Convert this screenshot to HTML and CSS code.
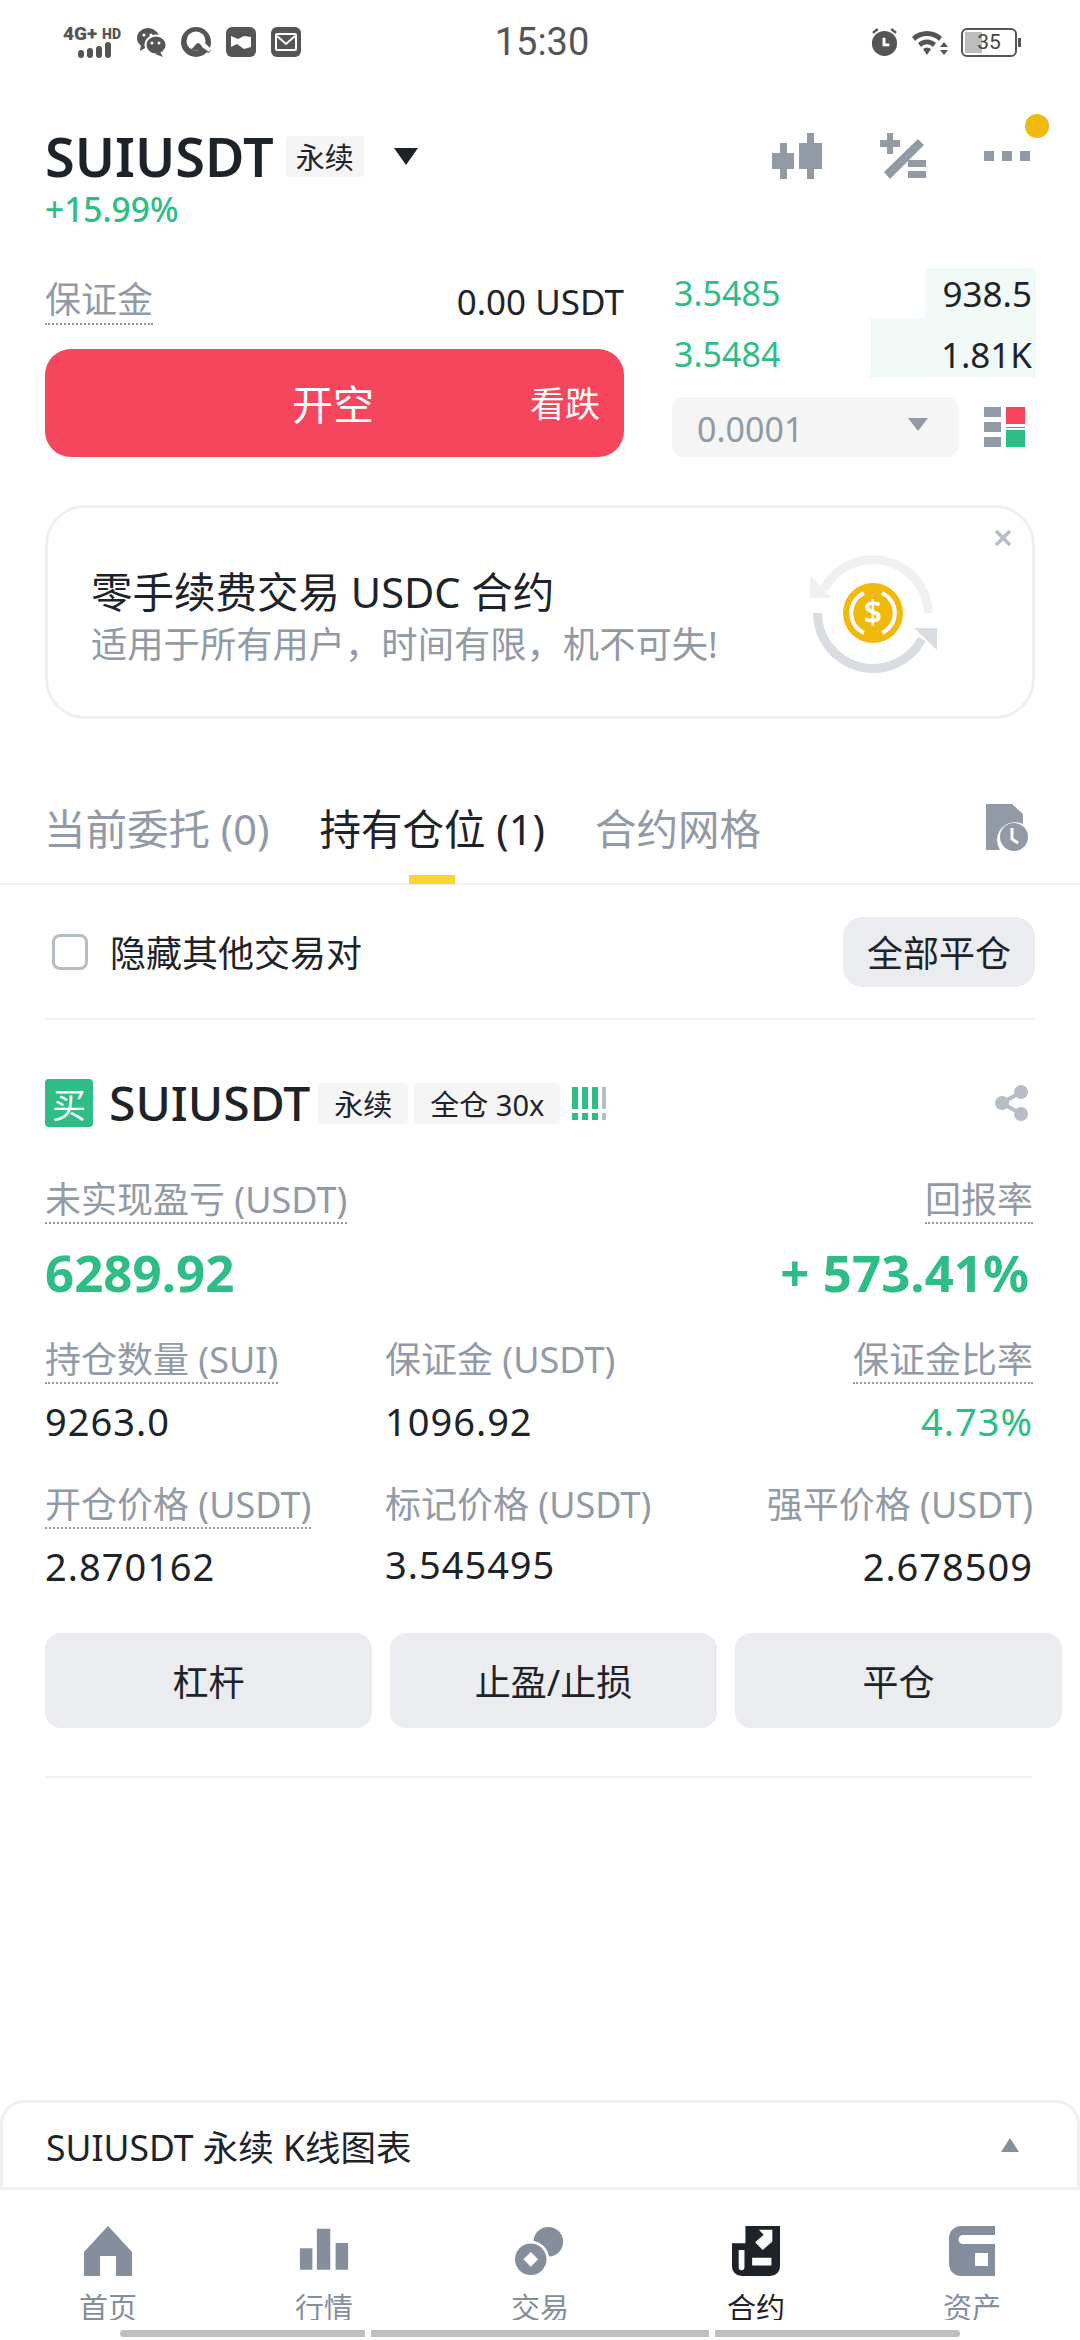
FILE: index.html
```html
<!DOCTYPE html>
<html lang="zh-CN">
<head>
    <meta charset="UTF-8">
    <meta name="viewport" content="width=device-width, initial-scale=1.0">
    <title>SUIUSDT 永续</title>
    <link rel="stylesheet" href="styles.css">
</head>
<body>
    <div class="status-bar">
        <div class="status-left">
            <div class="net">
                <div class="net-text"><span>4G+</span><span class="net-hd">HD</span></div>
                <div class="signal"><i class="s1"></i><i class="s2"></i><i class="s3"></i><i class="s4"></i></div>
            </div>
            <svg class="st-icon" viewBox="0 0 30 30"><ellipse cx="12" cy="11" rx="11" ry="10" fill="#555"/><path d="M5 18l-1 6 7-4z" fill="#555"/><circle cx="8" cy="8" r="1.6" fill="#fff"/><circle cx="15" cy="8" r="1.6" fill="#fff"/><ellipse cx="20" cy="18" rx="10.5" ry="9.5" fill="#555" stroke="#fff" stroke-width="2"/><path d="M24 25l3 5-8-3z" fill="#555"/><circle cx="16" cy="16" r="1.5" fill="#fff"/><circle cx="23" cy="16" r="1.5" fill="#fff"/></svg>
            <svg class="st-icon" viewBox="0 0 30 30"><circle cx="15" cy="15" r="15" fill="#555"/><circle cx="15" cy="14" r="9.500" fill="#fff"/><path d="M10 22c3-1 4-5 7-6 2 0 3 3 5 4l8 3-2 3-8-3c-2 0-8 1-10-1z" fill="#555"/><path d="M21 13l9 9-2 3-7-5z" fill="#fff"/></svg>
            <svg class="st-icon" viewBox="0 0 30 30"><rect width="30" height="30" rx="6" fill="#555"/><path d="M5 9l7 3 6-3 7 1v10l-7 2-7-5-6 3z" fill="#fff"/></svg>
            <svg class="st-icon" viewBox="0 0 30 30"><rect width="30" height="30" rx="6" fill="#555"/><rect x="5" y="7" width="20" height="16" rx="1" fill="none" stroke="#fff" stroke-width="2"/><path d="M6 9l9 8 9-8" fill="none" stroke="#fff" stroke-width="2"/></svg>
        </div>
        <div class="status-time">15:30</div>
        <div class="status-right">
            <svg class="st-alarm" viewBox="0 0 30 30"><circle cx="15" cy="16" r="13" fill="#555"/><path d="M3 5l5-4M27 5l-5-4" stroke="#555" stroke-width="2.5"/><path d="M13 10v9h7v-3h-4v-6z" fill="#fff"/></svg>
            <svg class="st-wifi" viewBox="0 0 38 28"><path d="M1 9a22 22 0 0 1 30 0l-3 4a17 17 0 0 0-24 0zM7 15a13 13 0 0 1 18 0l-3 4a8 8 0 0 0-12 0zM12 21a6 6 0 0 1 8 0l-4 6z" fill="#555"/><path d="M33 14l4 5h-8zM33 27l4-5h-8z" fill="#555"/></svg>
            <div class="battery"><div class="battery-fill"></div><span class="battery-num">35</span></div>
            <div class="battery-tip"></div>
        </div>
    </div>

    <div class="header">
        <div class="title-row">
            <div class="symbol">SUIUSDT</div>
            <div class="tag tag-top">永续</div>
            <div class="title-caret"></div>
            <div class="title-tools">
                <svg class="tool" viewBox="0 0 50 46"><path d="M8 10h7v10h7v16h-7v10H8V36H0V20h8zM35 0h7v10h8v26h-8v10h-7V36h-8V10h8z" fill="#929AA5"/></svg>
                <svg class="tool tool-calc" viewBox="0 0 46 46"><path d="M7 0h6v7h7v7h-7v7H7v-7H0V7h7zM38 6l6 6-34 34-6-7zM28 27h18v7H28zM28 38h18v7H28z" fill="#929AA5"/></svg>
                <div class="tool-more"><i></i><i></i><i></i><span class="more-dot"></span></div>
            </div>
        </div>
        <div class="change">+15.99%</div>
    </div>

    <div class="trade">
        <div class="trade-left">
            <div class="margin-row">
                <span class="dotted margin-label">保证金</span>
                <span class="margin-value">0.00 USDT</span>
            </div>
            <div class="short-btn"><span class="short-main">开空</span><span class="short-side">看跌</span></div>
        </div>
        <div class="book">
            <div class="book-row row-a"><span class="price">3.5485</span><span class="qty" style="width:111px">938.5</span></div>
            <div class="book-row row-b"><span class="price">3.5484</span><span class="qty" style="width:166px">1.81K</span></div>
            <div class="book-tools">
                <div class="tick"><span>0.0001</span><i class="tick-caret"></i></div>
                <svg class="depth" viewBox="0 0 41 40"><path d="M0 0h17v10H0zM0 15h17v10H0zM0 30h17v10H0z" fill="#929AA5"/><path d="M22 0h19v17H22z" fill="#F6465D"/><path d="M22 20h19v1H22z" fill="#2EBD85"/><path d="M22 23h19v17H22z" fill="#2EBD85"/></svg>
            </div>
        </div>
    </div>

    <div class="promo">
        <div class="promo-text">
            <div class="promo-title">零手续费交易 USDC 合约</div>
            <div class="promo-sub">适用于所有用户，时间有限，机不可失!</div>
        </div>
        <svg class="promo-icon" viewBox="0 0 127 122">
            <path d="M118.500 60A55.500 55.500 0 0 0 14 36" fill="none" stroke="#EEF0F2" stroke-width="9"/>
            <path d="M0 22V45H22z" fill="#EEF0F2"/>
            <path d="M7.500 60A55.500 55.500 0 0 0 112 86" fill="none" stroke="#D9DCE1" stroke-width="9"/>
            <path d="M127 75V97L104 75z" fill="#D9DCE1"/>
            <circle cx="63" cy="60" r="30" fill="#F0B90B"/>
            <path d="M54 40a22 22 0 0 0 0 40M72 40a22 22 0 0 1 0 40" fill="none" stroke="#fff" stroke-width="4"/>
            <text class="coin-sign" x="63" y="71">$</text>
        </svg>
        <svg class="promo-close" viewBox="0 0 18 18"><path d="M2 2l14 14M16 2L2 16" stroke="#B7BDC6" stroke-width="3.5"/></svg>
    </div>

    <div class="tabs">
        <div class="tab">当前委托 (0)</div>
        <div class="tab tab-on">持有仓位 (1)</div>
        <div class="tab">合约网格</div>
        <svg class="tab-history" viewBox="0 0 44 48"><path d="M0 0h26l11 10v10a18 18 0 0 0-23 26H0z" fill="#929AA5"/><circle cx="28" cy="33" r="14" fill="#929AA5"/><path d="M26 24v11l6 4" fill="none" stroke="#fff" stroke-width="3"/></svg>
    </div>

    <div class="filter">
        <label class="hide-other"><span class="checkbox"></span>隐藏其他交易对</label>
        <div class="close-all">全部平仓</div>
    </div>

    <div class="position">
        <div class="pos-head">
            <div class="buy">买</div>
            <div class="pos-symbol">SUIUSDT</div>
            <div class="tag">永续</div>
            <div class="tag">全仓 30x</div>
            <div class="risk"><i></i><i></i><i></i><i class="risk-off"></i></div>
            <svg class="share" viewBox="0 0 34 36"><circle cx="26" cy="7" r="7" fill="#B7BDC6"/><circle cx="7" cy="18" r="7" fill="#B7BDC6"/><circle cx="26" cy="29" r="7" fill="#B7BDC6"/><path d="M26 7L7 18l19 11" fill="none" stroke="#B7BDC6" stroke-width="4"/></svg>
        </div>

        <div class="pnl">
            <div class="cell">
                <span class="dotted label">未实现盈亏 (USDT)</span>
                <div class="pnl-value">6289.92</div>
            </div>
            <div class="cell cell-right">
                <span class="dotted label">回报率</span>
                <div class="pnl-value">+ 573.41%</div>
            </div>
        </div>

        <div class="stats">
            <div class="cell">
                <span class="dotted label">持仓数量 (SUI)</span>
                <div class="value">9263.0</div>
            </div>
            <div class="cell">
                <span class="label">保证金 (USDT)</span>
                <div class="value">1096.92</div>
            </div>
            <div class="cell cell-right">
                <span class="dotted label">保证金比率</span>
                <div class="value value-green">4.73%</div>
            </div>
            <div class="cell">
                <span class="dotted label">开仓价格 (USDT)</span>
                <div class="value">2.870162</div>
            </div>
            <div class="cell">
                <span class="label">标记价格 (USDT)</span>
                <div class="value value-mark">3.545495</div>
            </div>
            <div class="cell cell-right">
                <span class="label">强平价格 (USDT)</span>
                <div class="value">2.678509</div>
            </div>
        </div>

        <div class="actions">
            <div class="action">杠杆</div>
            <div class="action">止盈/止损</div>
            <div class="action">平仓</div>
        </div>
        <div class="pos-line"></div>
    </div>

    <div class="chart-bar">
        <span>SUIUSDT 永续 K线图表</span>
        <i class="chart-caret"></i>
    </div>

    <div class="nav">
        <div class="nav-items">
            <div class="nav-item">
                <svg class="nav-icon" viewBox="0 0 50 50"><path d="M25 0l24 26v24H33V30H17v20H1V26z" fill="#848E9C"/></svg>
                <span class="nav-label">首页</span>
            </div>
            <div class="nav-item">
                <svg class="nav-icon" viewBox="0 0 56 50"><path d="M1 22h14v24H1zM20 0h15v46H20zM41 16h14v30H41z" fill="#848E9C"/></svg>
                <span class="nav-label">行情</span>
            </div>
            <div class="nav-item">
                <svg class="nav-icon" viewBox="0 0 54 54"><circle cx="36" cy="17" r="16" fill="#848E9C"/><circle cx="17" cy="36" r="20" fill="#fff"/><circle cx="17" cy="36" r="17" fill="#848E9C"/><path d="M17 28l8 8-8 8-8-8z" fill="#fff"/></svg>
                <span class="nav-label">交易</span>
            </div>
            <div class="nav-item">
                <svg class="nav-icon" viewBox="0 0 50 52"><path d="M14 0h36v42a10 10 0 0 1-10 10H10A10 10 0 0 1 0 42V18h14z" fill="#1E2329"/><path d="M7 25h6v18a3 3 0 0 1-6 0zM21 33h20v8H21zM24 17l8 8 10-9V4H28l5 5z" fill="#fff"/></svg>
                <span class="nav-label nav-on">合约</span>
            </div>
            <div class="nav-item">
                <svg class="nav-icon" viewBox="0 0 50 50"><path d="M14 0h34v50H14A12 12 0 0 1 2 38V12A12 12 0 0 1 14 0z" fill="#848E9C"/><path d="M16 9h32v9H16a4.500 4.500 0 0 1 0-9zM28 27h13v13H28z" fill="#fff"/></svg>
                <span class="nav-label">资产</span>
            </div>
        </div>
        <div class="home-bars"><i class="hb1"></i><i class="hb2"></i><i class="hb3"></i></div>
    </div>
</body>
</html>
```

FILE: styles.css
```css
* {
    box-sizing: border-box;
}
body {
    margin: 0;
    width: 1080px;
    height: 2340px;
    overflow: hidden;
    display: flex;
    flex-direction: column;
    background: #fff;
    color: #1E2329;
    font-family: "Noto Sans", "Noto Sans CJK SC", sans-serif;
    font-size: 36px;
}
i {
    display: block;
}

/* status bar */
.status-bar {
    height: 84px;
    display: grid;
    grid-template-columns: 1fr auto 1fr;
    align-items: center;
    padding: 0 59px 0 63px;
    color: #555;
}
.status-left {
    display: flex;
    align-items: center;
    gap: 15px;
}
.status-right {
    display: flex;
    align-items: center;
    justify-content: flex-end;
}
.status-time {
    font-family: Roboto, sans-serif;
    font-size: 38px;
}
.net {
    width: 58px;
}
.net-text {
    display: flex;
    justify-content: space-between;
    align-items: center;
    height: 16px;
    font-family: Roboto, sans-serif;
    font-weight: 900;
    font-size: 19px;
    line-height: 16px;
}
.net-hd {
    font-size: 14px;
}
.signal {
    display: flex;
    align-items: flex-end;
    justify-content: center;
    gap: 3px;
    height: 16px;
    margin-left: 4px;
}
.signal i {
    width: 6px;
    border-radius: 3px;
    background: #555;
}
.s1 { height: 8px; }
.s2 { height: 10px; }
.s3 { height: 12px; }
.s4 { height: 16px; }
.st-icon {
    width: 30px;
    height: 30px;
}
.st-alarm {
    width: 29px;
    height: 29px;
    margin-right: 12px;
}
.st-wifi {
    width: 38px;
    height: 28px;
    margin-right: 12px;
}
.battery {
    position: relative;
    width: 56px;
    height: 29px;
    border: 2px solid #555;
    border-radius: 6px;
    display: flex;
    align-items: center;
    justify-content: center;
}
.battery-fill {
    position: absolute;
    left: 2px;
    top: 2px;
    bottom: 2px;
    width: 17px;
    background: #BDBDBD;
}
.battery-num {
    position: relative;
    font-family: Roboto, sans-serif;
    font-size: 21px;
    line-height: 1;
    color: #444;
}
.battery-tip {
    width: 3px;
    height: 9px;
    margin-left: 1px;
    background: #555;
}

/* header */
.header {
    padding: 44px 0 0 45px;
    height: 184px;
}
.title-row {
    display: flex;
    align-items: center;
    height: 56px;
}
.symbol {
    font-size: 54px;
    font-weight: 600;
    line-height: 56px;
}
.tag {
    display: flex;
    align-items: center;
    height: 41px;
    padding: 0 16px;
    background: #F5F5F5;
    border-radius: 4px;
    font-size: 29px;
    margin-right: 6px;
}
.tag-top {
    margin-left: 12px;
    margin-right: 30px;
    padding: 0 10px;
}
.title-caret {
    width: 0;
    height: 0;
    border-left: 12px solid transparent;
    border-right: 12px solid transparent;
    border-top: 17px solid #1E2329;
}
.title-tools {
    display: flex;
    align-items: center;
    margin-left: auto;
    margin-right: 50px;
}
.tool {
    width: 50px;
    height: 46px;
    margin-right: 58px;
}
.tool-calc {
    width: 46px;
    margin-right: 58px;
}
.tool-more {
    position: relative;
    display: flex;
    gap: 8px;
}
.tool-more i {
    width: 10px;
    height: 10px;
    background: #929AA5;
}
.more-dot {
    position: absolute;
    right: -19px;
    top: -37px;
    width: 24px;
    height: 24px;
    border-radius: 50%;
    background: #F0B90B;
}
.change {
    margin-top: 4px;
    color: #2EBD85;
    font-size: 33.500px;
    font-weight: 500;
    line-height: 42px;
}

/* trade */
.trade {
    display: flex;
    gap: 48px;
    padding-left: 45px;
    height: 189px;
}
.trade-left {
    width: 579px;
    display: flex;
    flex-direction: column;
    justify-content: flex-end;
}
.margin-row {
    display: flex;
    justify-content: space-between;
    align-items: flex-start;
    margin-bottom: 24px;
}
.dotted {
    border-bottom: 2px dotted #929AA5;
}
.margin-label {
    color: #929AA5;
    font-size: 36px;
    line-height: 47px;
}
.margin-value {
    font-size: 35px;
    line-height: 47px;
    padding-top: 2px;
}
.short-btn {
    position: relative;
    display: flex;
    align-items: center;
    justify-content: center;
    height: 108px;
    padding-bottom: 3px;
    border-radius: 26px;
    background: #F6465D;
    color: #fff;
}
.short-main {
    font-size: 41px;
    margin-left: -3px;
}
.short-side {
    position: absolute;
    right: 24px;
    font-size: 35px;
}
.book {
    width: 364px;
}
.book-row {
    display: flex;
    justify-content: space-between;
    align-items: center;
    padding-left: 2px;
}
.row-a {
    height: 50px;
}
.row-b {
    height: 60px;
}
.row-b .price,
.row-b .qty {
    padding-top: 12px;
}
.price {
    color: #2EBD85;
    font-size: 34px;
}
.qty {
    height: 100%;
    display: flex;
    align-items: center;
    justify-content: flex-end;
    padding-right: 4px;
    background: #F1FAF6;
    font-size: 35px;
}
.book-tools {
    display: flex;
    align-items: center;
    margin-top: 19px;
}
.tick {
    width: 287px;
    height: 60px;
    display: flex;
    align-items: center;
    justify-content: space-between;
    padding: 3px 31px 0 25px;
    background: #F5F5F5;
    border-radius: 12px;
    color: #929AA5;
    font-size: 34px;
}
.tick-caret {
    width: 0;
    height: 0;
    border-left: 10px solid transparent;
    border-right: 10px solid transparent;
    border-top: 13px solid #929AA5;
    margin-top: -8px;
}
.depth {
    width: 41px;
    height: 40px;
    margin-left: 25px;
}

/* promo card */
.promo {
    position: relative;
    display: flex;
    align-items: center;
    justify-content: space-between;
    width: 990px;
    height: 214px;
    margin: 48px 0 0 45px;
    padding: 0 95px 0 43px;
    border: 3px solid #EEF0F2;
    border-radius: 40px;
}
.promo-text {
    margin-top: 10px;
}
.promo-title {
    font-size: 41.500px;
    line-height: 56px;
}
.promo-sub {
    margin-top: -2px;
    color: #929AA5;
    font-size: 36.300px;
    line-height: 52px;
}
.promo-icon {
    flex: none;
    width: 127px;
    height: 122px;
    margin-top: 3px;
}
.coin-sign {
    fill: #fff;
    font-size: 32px;
    font-weight: 600;
    text-anchor: middle;
}
.promo-close {
    position: absolute;
    right: 20px;
    top: 21px;
    width: 18px;
    height: 18px;
}

/* tabs */
.tabs {
    position: relative;
    display: flex;
    align-items: center;
    height: 166px;
    padding: 44px 0 0 44px;
    gap: 50px;
    border-bottom: 2px solid #EEF0F2;
    color: #929AA5;
    font-size: 41.500px;
    line-height: 60px;
}
.tab {
    position: relative;
    margin-top: 12px;
}
.tab-on {
    color: #1E2329;
}
.tab-on::after {
    content: "";
    position: absolute;
    left: 50%;
    bottom: -25px;
    width: 46px;
    height: 9px;
    margin-left: -23px;
    background: #FCD535;
}
.tab-history {
    position: absolute;
    right: 50px;
    top: 85px;
    width: 44px;
    height: 48px;
}

/* filter row */
.filter {
    display: flex;
    align-items: center;
    justify-content: space-between;
    height: 135px;
    margin: 0 45px;
    border-bottom: 2px solid #EEF0F2;
}
.hide-other {
    display: flex;
    align-items: center;
    padding-left: 7px;
    gap: 22px;
    font-size: 36px;
}
.checkbox {
    width: 36px;
    height: 36px;
    border: 3px solid #B7BDC6;
    border-radius: 8px;
}
.close-all {
    display: flex;
    align-items: center;
    justify-content: center;
    width: 192px;
    height: 70px;
    border-radius: 20px;
    background: #EAECEF;
}

/* position */
.position {
    padding: 59px 0 0 45px;
}
.pos-head {
    display: flex;
    align-items: center;
    height: 48px;
    width: 990px;
}
.buy {
    display: flex;
    align-items: center;
    justify-content: center;
    width: 48px;
    height: 48px;
    margin-right: 16px;
    background: #2EBD85;
    border-radius: 4px;
    color: #fff;
    font-size: 34px;
}
.pos-symbol {
    font-size: 48px;
    font-weight: 500;
    margin-right: 8px;
    line-height: 48px;
}
.risk {
    display: flex;
    gap: 4px;
    margin-left: 6px;
}
.risk i {
    width: 6px;
    height: 33px;
    background: linear-gradient(#2EBD85 0 68%, #fff 68% 80%, #2EBD85 80%);
}
.risk i.risk-off {
    width: 4px;
    background: linear-gradient(#B7BDC6 0 68%, #fff 68% 80%, #B7BDC6 80%);
}
.share {
    width: 34px;
    height: 36px;
    margin-left: auto;
    margin-right: 6px;
}
.pnl {
    display: flex;
    justify-content: space-between;
    width: 988px;
    margin-top: 48px;
}
.cell-right {
    text-align: right;
}
.label {
    display: inline-block;
    color: #929AA5;
    font-size: 36px;
    line-height: 44px;
}
.pnl-value {
    margin-top: 18px;
    color: #2EBD85;
    font-size: 51px;
    font-weight: 700;
    line-height: 60px;
}
.cell-right .pnl-value {
    padding-right: 4px;
}
.stats {
    display: grid;
    grid-template-columns: 340px 1fr auto;
    row-gap: 34px;
    width: 988px;
    margin-top: 33px;
}
.value {
    margin-top: 12px;
    font-size: 38px;
    letter-spacing: 1px;
    line-height: 50px;
}
.value-green {
    color: #2EBD85;
}
.value-mark {
    margin-top: 10px;
}
.actions {
    display: flex;
    gap: 18px;
    margin-top: 42px;
}
.action {
    display: flex;
    align-items: center;
    justify-content: center;
    width: 327px;
    height: 95px;
    border-radius: 16px;
    background: #EAECEF;
}
.pos-line {
    width: 987px;
    height: 2px;
    margin-top: 48px;
    background: #EEF0F2;
}

/* bottom */
.chart-bar {
    display: flex;
    align-items: center;
    justify-content: space-between;
    margin-top: auto;
    height: 90px;
    padding: 0 58px 0 43px;
    border: 3px solid #EEF0F2;
    border-radius: 24px 24px 0 0;
    font-size: 35.500px;
}
.chart-caret {
    width: 0;
    height: 0;
    border-left: 9px solid transparent;
    border-right: 9px solid transparent;
    border-bottom: 14px solid #848E9C;
}
.nav {
    height: 150px;
    padding-top: 36px;
}
.nav-items {
    display: flex;
}
.nav-item {
    width: 216px;
    display: flex;
    flex-direction: column;
    align-items: center;
    color: #848E9C;
}
.nav-icon {
    width: 50px;
    height: 50px;
}
.nav-label {
    height: 30px;
    margin-top: 14px;
    overflow: hidden;
    font-size: 29px;
    line-height: 36px;
}
.nav-on {
    color: #1E2329;
}
.home-bars {
    display: flex;
    justify-content: center;
    gap: 6px;
    margin-top: 10px;
}
.home-bars i {
    height: 7px;
    background: #BFBFBF;
}
.hb1 {
    width: 245px;
    border-radius: 4px 0 0 4px;
}
.hb2 {
    width: 338px;
}
.hb3 {
    width: 245px;
    border-radius: 0 4px 4px 0;
}
```
